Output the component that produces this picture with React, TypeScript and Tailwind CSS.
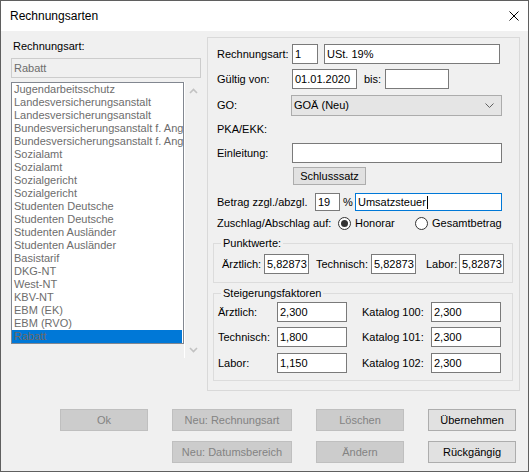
import React from "react";

const listItems = [
  "Jugendarbeitsschutz",
  "Landesversicherungsanstalt",
  "Landesversicherungsanstalt",
  "Bundesversicherungsanstalt f. Angestellte",
  "Bundesversicherungsanstalt f. Angestellte",
  "Sozialamt",
  "Sozialamt",
  "Sozialgericht",
  "Sozialgericht",
  "Studenten Deutsche",
  "Studenten Deutsche",
  "Studenten Ausländer",
  "Studenten Ausländer",
  "Basistarif",
  "DKG-NT",
  "West-NT",
  "KBV-NT",
  "EBM (EK)",
  "EBM (RVO)",
  "Rabatt",
];

function TextBox({ value = "", className = "", focused = false }: { value?: string; className?: string; focused?: boolean }) {
  return (
    <div
      className={`flex items-center overflow-hidden whitespace-nowrap bg-white pl-[2px] text-black border ${
        focused ? "border-[#0078d7]" : "border-[#7a7a7a]"
      } ${className}`}
    >
      {value}
      {focused && <span className="ml-[1px] h-[13px] w-[1px] bg-black" />}
    </div>
  );
}

function Button({ label, disabled = false }: { label: string; disabled?: boolean }) {
  return (
    <div
      className={`flex h-[22px] items-center justify-center border ${
        disabled ? "border-[#bfbfbf] bg-[#cccccc] text-[#838383]" : "border-[#adadad] bg-[#e1e1e1] text-black"
      }`}
    >
      {label}
    </div>
  );
}

function Radio({ checked }: { checked: boolean }) {
  return (
    <div className="flex h-[13px] w-[13px] items-center justify-center rounded-full border border-[#333333] bg-white">
      {checked && <div className="h-[7px] w-[7px] rounded-full bg-[#333333]" />}
    </div>
  );
}

function Chevron({ up }: { up: boolean }) {
  return (
    <svg width="9" height="6" viewBox="0 0 9 6">
      <polyline
        points={up ? "1,5 4.5,1.5 8,5" : "1,1 4.5,4.5 8,1"}
        fill="none"
        stroke="#c2c2c2"
        strokeWidth="1.6"
      />
    </svg>
  );
}

export default function App() {
  return (
    <div className="flex h-[472px] w-[529px] flex-col border border-[#5f5f5f] bg-[#f0f0f0] font-['Liberation_Sans',Arial,sans-serif] text-[11px] text-black">
      {/* title bar */}
      <div className="flex h-[30px] shrink-0 items-center justify-between bg-white pl-[9px] pr-[9px] text-[12px]">
        <span>Rechnungsarten</span>
        <svg width="10" height="10" viewBox="0 0 10 10">
          <path d="M0.5 0.5 L9.5 9.5 M9.5 0.5 L0.5 9.5" stroke="#000" strokeWidth="1" />
        </svg>
      </div>

      <div className="flex flex-1 flex-col">
        <div className="flex items-start">
          {/* left column */}
          <div className="ml-[10px] flex w-[190px] flex-col">
            <div className="mt-[9px] h-[13px] pl-[2px] leading-[13px]">Rechnungsart:</div>
            <div className="mt-[5px] flex h-[20px] items-center border border-[#cccccc] bg-[#f0f0f0] pl-[2px] text-[#6d6d6d]">
              Rabatt
            </div>
            <div className="mt-[4px] flex items-start">
              <div className="h-[262px] w-[173px] overflow-hidden border border-[#828790] bg-white">
                {listItems.map((item, i) => {
                  const selected = i === listItems.length - 1;
                  return (
                    <div
                      key={i}
                      className={`h-[13px] whitespace-nowrap pl-[2px] leading-[13px] ${
                        selected ? "mr-[1px] bg-[#0078d7] text-[#6e6a68]" : "text-[#6d6d6d]"
                      }`}
                    >
                      {item}
                    </div>
                  );
                })}
              </div>
              <div className="flex h-[276px] w-[17px] flex-col items-center justify-between border-l border-white pt-[6px] pb-[5px]">
                <Chevron up />
                <Chevron up={false} />
              </div>
            </div>
          </div>

          {/* right panel */}
          <div className="ml-[6px] mt-[6px] flex h-[354px] w-[313px] flex-col border border-[#d9d9d9]">
            <div className="mt-[6px] flex h-[20px] items-center pl-[9px]">
              <span className="w-[75px]">Rechnungsart:</span>
              <TextBox value="1" className="h-[20px] w-[26px]" />
              <TextBox value="USt. 19%" className="ml-[6px] h-[20px] w-[176px]" />
            </div>
            <div className="mt-[5px] flex h-[20px] items-center pl-[9px]">
              <span className="w-[75px]">Gültig von:</span>
              <TextBox value="01.01.2020" className="h-[20px] w-[65px]" />
              <span className="ml-[7px] w-[21px]">bis:</span>
              <TextBox className="h-[20px] w-[64px]" />
            </div>
            <div className="mt-[6px] flex h-[21px] items-center pl-[9px]">
              <span className="w-[74px]">GO:</span>
              <div className="flex h-[21px] w-[211px] items-center justify-between border border-[#acacac] bg-[#e5e5e5] pl-[2px] pr-[7px]">
                <span>GOÄ (Neu)</span>
                <svg width="9" height="5" viewBox="0 0 9 5">
                  <polyline points="0.5,0.5 4.5,4.5 8.5,0.5" fill="none" stroke="#606060" strokeWidth="1" />
                </svg>
              </div>
            </div>
            <div className="mt-[3px] flex h-[20px] items-center pl-[9px]">PKA/EKK:</div>
            <div className="mt-[4px] flex h-[20px] items-center pl-[9px]">
              <span className="w-[75px]">Einleitung:</span>
              <TextBox className="h-[20px] w-[210px]" />
            </div>
            <div className="mt-[4px] flex h-[18px] items-center pl-[85px]">
              <div className="flex h-[18px] w-[73px] items-center justify-center border border-[#adadad] bg-[#e1e1e1]">
                Schlusssatz
              </div>
            </div>
            <div className="mt-[8px] flex h-[18px] items-center pl-[9px]">
              <span className="w-[98px]">Betrag zzgl./abzgl.</span>
              <TextBox value="19" className="h-[18px] w-[25px]" />
              <span className="ml-[3px] w-[12px]">%</span>
              <TextBox value="Umsatzsteuer" focused className="h-[18px] w-[147px]" />
            </div>
            <div className="mt-[4px] flex h-[16px] items-center pl-[9px]">
              <span className="w-[121px]">Zuschlag/Abschlag auf:</span>
              <div className="flex w-[77px] items-center gap-[4px]">
                <Radio checked />
                <span>Honorar</span>
              </div>
              <div className="flex items-center gap-[4px]">
                <Radio checked={false} />
                <span>Gesamtbetrag</span>
              </div>
            </div>

            <fieldset className="mx-[5px] mt-[6px] w-[300px] border border-[#dcdcdc] pb-[8px]">
              <legend className="ml-[7px] px-[2px] leading-[13px]">Punktwerte:</legend>
              <div className="mt-[4px] flex h-[20px] items-center pl-[8px]">
                <span className="w-[42px]">Ärztlich:</span>
                <TextBox value="5,82873" className="h-[20px] w-[45px]" />
                <span className="ml-[7px] w-[55px]">Technisch:</span>
                <TextBox value="5,82873" className="h-[20px] w-[45px]" />
                <span className="ml-[10px] w-[33px]">Labor:</span>
                <TextBox value="5,82873" className="h-[20px] w-[45px]" />
              </div>
            </fieldset>

            <fieldset className="mx-[5px] mt-[4px] w-[300px] border border-[#dcdcdc] pb-[7px]">
              <legend className="ml-[7px] px-[2px] leading-[13px]">Steigerungsfaktoren</legend>
              {[
                ["Ärztlich:", "2,300", "Katalog 100:", "2,300", "mt-[2px]"],
                ["Technisch:", "1,800", "Katalog 101:", "2,300", "mt-[5px]"],
                ["Labor:", "1,150", "Katalog 102:", "2,300", "mt-[6px]"],
              ].map(([l1, v1, l2, v2, mt]) => (
                <div key={l1} className={`${mt} flex h-[20px] items-center pl-[4px]`}>
                  <span className="w-[59px]">{l1}</span>
                  <TextBox value={v1} className="h-[20px] w-[70px]" />
                  <span className="ml-[15px] w-[69px]">{l2}</span>
                  <TextBox value={v2} className="h-[20px] w-[70px]" />
                </div>
              ))}
            </fieldset>
          </div>
        </div>

        {/* buttons */}
        <div className="ml-[59px] mt-[18px] grid grid-cols-[88px_120px_88px_88px] gap-x-[24px] gap-y-[10px]">
          <Button label="Ok" disabled />
          <Button label="Neu: Rechnungsart" disabled />
          <Button label="Löschen" disabled />
          <Button label="Übernehmen" />
          <div />
          <Button label="Neu: Datumsbereich" disabled />
          <Button label="Ändern" disabled />
          <Button label="Rückgängig" />
        </div>
      </div>
    </div>
  );
}
